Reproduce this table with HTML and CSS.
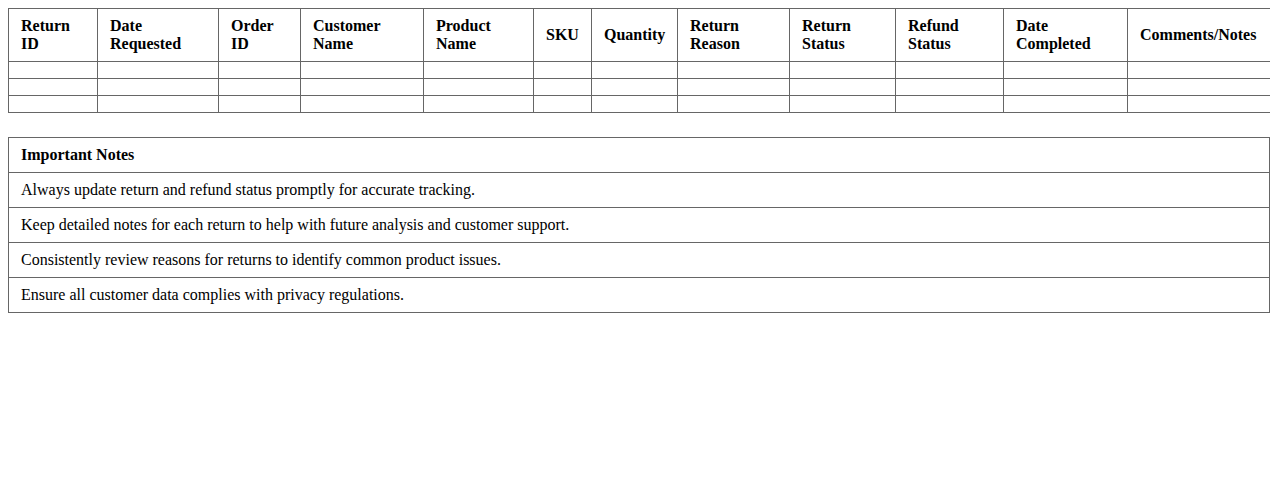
FILE: index.html
```html
<!DOCTYPE html>
<html>
<head>
<meta charset="utf-8">
<link rel="stylesheet" href="styles.css">
</head>
<body>
<table class="grid">
  <colgroup>
    <col class="c-rid">
    <col class="c-date">
    <col class="c-oid">
    <col class="c-cust">
    <col class="c-prod">
    <col class="c-sku">
    <col class="c-qty">
    <col class="c-reason">
    <col class="c-rstatus">
    <col class="c-fstatus">
    <col class="c-done">
    <col class="c-notes">
  </colgroup>
  <thead>
    <tr>
      <th>Return<br>ID</th>
      <th>Date<br>Requested</th>
      <th>Order<br>ID</th>
      <th>Customer<br>Name</th>
      <th>Product<br>Name</th>
      <th>SKU</th>
      <th>Quantity</th>
      <th>Return<br>Reason</th>
      <th>Return<br>Status</th>
      <th>Refund<br>Status</th>
      <th>Date<br>Completed</th>
      <th>Comments/Notes</th>
    </tr>
  </thead>
  <tbody>
    <tr><td></td><td></td><td></td><td></td><td></td><td></td><td></td><td></td><td></td><td></td><td></td><td></td></tr>
    <tr><td></td><td></td><td></td><td></td><td></td><td></td><td></td><td></td><td></td><td></td><td></td><td></td></tr>
    <tr><td></td><td></td><td></td><td></td><td></td><td></td><td></td><td></td><td></td><td></td><td></td><td></td></tr>
  </tbody>
</table>
<table class="notes">
  <tr><th>Important Notes</th></tr>
  <tr><td>Always update return and refund status promptly for accurate tracking.</td></tr>
  <tr><td>Keep detailed notes for each return to help with future analysis and customer support.</td></tr>
  <tr><td>Consistently review reasons for returns to identify common product issues.</td></tr>
  <tr><td>Ensure all customer data complies with privacy regulations.</td></tr>
</table>
</body>
</html>
```

FILE: styles.css
```css
body {
  margin: 8px;
  font-family: "Liberation Serif", "Times New Roman", serif;
  font-size: 16px;
  color: #000;
  background: #fff;
}
table {
  width: 100%;
  border-collapse: collapse;
}
th, td {
  border: 1px solid #666;
  padding: 8px 12px;
  text-align: left;
  vertical-align: middle;
}
th {
  font-weight: bold;
}
.grid {
  table-layout: fixed;
  margin-bottom: 24px;
}
.c-rid { width: 89px; }
.c-date { width: 121px; }
.c-oid { width: 82px; }
.c-cust { width: 123px; }
.c-prod { width: 110px; }
.c-sku { width: 58px; }
.c-qty { width: 86px; }
.c-reason { width: 112px; }
.c-rstatus { width: 106px; }
.c-fstatus { width: 108px; }
.c-done { width: 124px; }
.c-notes { width: 143px; }
```
